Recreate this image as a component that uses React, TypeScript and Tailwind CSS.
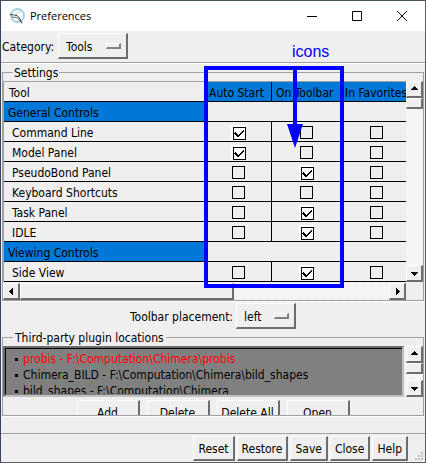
import React, { useState } from 'react';

const raised =
  'border-t border-l border-b-2 border-r-2 border-t-white border-l-white border-b-[#6d6d6d] border-r-[#6d6d6d] bg-[#efefef]';
const trough =
  'bg-[conic-gradient(#ffffff_25%,#ececec_0_50%,#ffffff_0_75%,#ececec_0)] bg-[length:2px_2px]';

type Row = { name: string; checks?: boolean[] };

const rows: Row[] = [
  { name: 'General Controls' },
  { name: 'Command Line', checks: [true, false, false] },
  { name: 'Model Panel', checks: [true, false, false] },
  { name: 'PseudoBond Panel', checks: [false, true, false] },
  { name: 'Keyboard Shortcuts', checks: [false, false, false] },
  { name: 'Task Panel', checks: [false, true, false] },
  { name: 'IDLE', checks: [false, true, false] },
  { name: 'Viewing Controls' },
  { name: 'Side View', checks: [false, true, false] },
];

const columns = ['Auto Start', 'On Toolbar', 'In Favorites'];

const plugins = [
  { text: 'probis - F:\\Computation\\Chimera\\probis', active: true },
  { text: 'Chimera_BILD - F:\\Computation\\Chimera\\bild_shapes', active: false },
  { text: 'bild_shapes - F:\\Computation\\Chimera', active: false },
];

function Check({ initial, label }: { initial: boolean; label: string }) {
  const [on, setOn] = useState(initial);
  return (
    <span className={`relative mx-auto block size-[15px] ${on ? 'bg-white pt-[2px] pl-[2px]' : 'pt-px pl-px'}`}>
      <input
        type="checkbox"
        aria-label={label}
        checked={on}
        onChange={() => setOn(!on)}
        className="block size-[13px] appearance-none border border-black bg-transparent"
      />
      {on && (
        <svg viewBox="0 0 13 13" className="pointer-events-none absolute top-[2px] left-[2px] size-[13px]" shapeRendering="crispEdges">
          <path d="M2 5h1v1h1v1h1v1h1v-1h1v-1h1v-1h1v-1h1v-1h1v2h-1v1h-1v1h-1v1h-1v1h-1v1h-2v-1h-1v-1h-1v-1h-1z" />
        </svg>
      )}
    </span>
  );
}

function Arrow({ dir }: { dir: 'up' | 'down' | 'left' | 'right' }) {
  const paths = {
    up: 'M4 1h1v1h1v1h1v1h1v1h-7v-1h1v-1h1v-1h1z',
    down: 'M1 3h7v1h-1v1h-1v1h-1v1h-1v-1h-1v-1h-1v-1h-1z',
    left: 'M2 4h1v-1h1v-1h1v-1h1v7h-1v-1h-1v-1h-1v-1h-1z',
    right: 'M3 1h1v1h1v1h1v1h1v1h-1v1h-1v1h-1v1h-1z',
  };
  return (
    <button aria-label={`Scroll ${dir}`} className={`flex size-[17px] shrink-0 items-center justify-center ${raised}`}>
      <svg viewBox="0 0 9 9" className="size-[9px] shrink-0" shapeRendering="crispEdges">
        <path d={paths[dir]} />
      </svg>
    </button>
  );
}

function VerticalScroll() {
  return (
    <div className={`flex w-[17px] shrink-0 flex-col ${trough}`}>
      <Arrow dir="up" />
      <div className={`h-[11px] ${raised}`} />
      <div className="flex-1" />
      <Arrow dir="down" />
    </div>
  );
}

function Menu({ id, value, options, width }: { id: string; value: string; options: string[]; width: string }) {
  return (
    <span className={`relative block h-[26px] ${width}`}>
      <select id={id} defaultValue={value} className={`block h-full w-full appearance-none pt-[2px] pl-[7px] ${raised}`}>
        {options.map((o) => (
          <option key={o}>{o}</option>
        ))}
      </select>
      <span className="pointer-events-none absolute top-[10px] right-[7px] h-[6px] w-[15px] border-t border-r-2 border-b-2 border-l border-t-white border-r-[#808080] border-b-[#808080] border-l-white" />
    </span>
  );
}

export default function App() {
  return (
    <div className="relative flex flex-col border border-t-[#4a5361] border-r-[#5c5f63] border-b-[#5c5f63] border-l-[#35465c] bg-[#efefef] font-['DejaVu_Sans_Condensed','Noto_Sans',sans-serif] text-[12px] leading-4 text-black">
      <header className="flex h-[30px] items-center bg-white font-['Open_Sans',sans-serif] text-[11px]">
        <svg viewBox="0 0 17 17" className="ml-[8px] size-[17px]" fill="none">
          <circle cx="8.5" cy="7.5" r="6.5" stroke="#a9cfe2" strokeWidth="2" />
          <path d="M1 6.5L8 7.5L10.5 10L13 15.5" stroke="#28323c" strokeWidth="1" />
          <path d="M3 8.5L11.5 3.5" stroke="#c2cdd4" strokeWidth="1" />
          <path d="M3 9L8 9.5L12.5 14.5" stroke="#5a6670" strokeWidth="1" />
        </svg>
        <h1 className="ml-[4px] flex-1">Preferences</h1>
        <button aria-label="Minimize" className="flex w-[46px] justify-center">
          <svg viewBox="0 0 10 10" className="size-[10px]" stroke="#000"><path d="M0 5.5h10" /></svg>
        </button>
        <button aria-label="Maximize" className="flex w-[44px] justify-center">
          <svg viewBox="0 0 10 10" className="size-[10px]" fill="none" stroke="#000"><path d="M.5.5h9v9h-9z" /></svg>
        </button>
        <button aria-label="Close window" className="flex w-[46px] justify-center">
          <svg viewBox="0 0 10 10" className="size-[10px]" stroke="#000"><path d="M0 0l10 10M10 0L0 10" /></svg>
        </button>
      </header>

      <div className="flex h-[32px] items-start gap-[4px] border-b border-[#a0a0a0] pt-[2px] pl-px shadow-[0_1px_0_#fff]">
        <label htmlFor="category" className="pt-[6px]">Category:</label>
        <Menu id="category" value="Tools" options={['Tools', 'General', 'Messages']} width="w-[70px]" />
      </div>

      <fieldset className="mx-px mt-px min-w-0 border border-[#a0a0a0] shadow-[0_1px_0_#fff]">
        <legend className="ml-[10px] h-[17px] bg-[#efefef] px-px pt-px">Settings</legend>
        <div className="flex">
          <div className="min-w-0 flex-1 overflow-hidden border-t border-l border-[#a0a0a0]">
            <table className="w-[408px] table-fixed border-separate border-spacing-0 text-left">
              <colgroup>
                <col className="w-[201px]" />
                <col className="w-[67px]" />
                <col className="w-[69px]" />
                <col className="w-[71px]" />
              </colgroup>
              <thead>
                <tr className="h-[20px]">
                  <th className="border-b border-black p-0 pt-[3px] pl-[5px] font-normal">Tool</th>
                  {columns.map((c) => (
                    <th key={c} className="border-r border-b border-black bg-[#0078d7] p-0 pt-[3px] pl-[4px] font-normal whitespace-nowrap">
                      {c}
                    </th>
                  ))}
                </tr>
              </thead>
              <tbody>
                {rows.map((r) =>
                  r.checks ? (
                    <tr key={r.name} className="h-[20px]">
                      <th className="border-b border-black p-0 pt-[3px] pl-[8px] font-normal">{r.name}</th>
                      {r.checks.map((v, i) => (
                        <td key={columns[i]} className="border-r border-b border-black p-0 pt-[2px]">
                          <Check initial={v} label={`${r.name}: ${columns[i]}`} />
                        </td>
                      ))}
                    </tr>
                  ) : (
                    <tr key={r.name} className="h-[20px]">
                      <th className="border-b border-black bg-[#0078d7] p-0 pt-[3px] pl-[4px] font-normal">{r.name}</th>
                      <td colSpan={3} className="border-b border-black p-0" />
                    </tr>
                  ),
                )}
              </tbody>
            </table>
          </div>
          <VerticalScroll />
        </div>
        <div className="mt-px flex pr-[17px]">
          <div className={`flex min-w-0 flex-1 ${trough}`}>
            <Arrow dir="left" />
            <div className={`w-[214px] ${raised}`} />
            <div className="flex-1" />
            <Arrow dir="right" />
          </div>
        </div>
      </fieldset>

      <div className="flex justify-center gap-[3px] pt-[2px]">
        <label htmlFor="placement" className="pt-[6px]">Toolbar placement:</label>
        <Menu id="placement" value="left" options={['left', 'right', 'top', 'bottom']} width="w-[60px]" />
      </div>

      <fieldset className="mx-px min-w-0 border border-[#a0a0a0] shadow-[0_1px_0_#fff]">
        <legend className="ml-[10px] h-[17px] bg-[#efefef] px-[2px] pt-px">Third-party plugin locations</legend>
        <div className="flex h-[51px] gap-[2px]">
          <div className="min-w-0 flex-1 border-2 border-[#6d6d6d] border-r-[#c0c0c0] border-b-[#c0c0c0] bg-[#808080] pb-px pl-[10px] shadow-[inset_1px_1px_0_#000]">
            <ul className="h-full overflow-hidden pt-[3px]">
              {plugins.map((p) => (
                <li key={p.text} className={`flex items-center gap-[5px] whitespace-nowrap ${p.active ? 'text-[#ff0000]' : ''}`}>
                  <span className="size-[3px] bg-black" />
                  {p.text}
                </li>
              ))}
            </ul>
          </div>
          <VerticalScroll />
        </div>
        <div className="mt-[3px] flex h-[15px] items-start justify-center gap-[7px] overflow-hidden">
          {['Add', 'Delete', 'Delete All', 'Open'].map((b) => (
            <button key={b} className={`h-[26px] w-[63px] shrink-0 whitespace-nowrap ${raised}`}>{b}</button>
          ))}
        </div>
      </fieldset>

      <footer className="mt-[17px] flex items-start border-t border-[#a0a0a0] pt-[2px] pb-px">
        <div className="flex flex-1 justify-end gap-[2px] pr-[6px]">
          {['Reset', 'Restore', 'Save', 'Close', 'Help'].map((b) => (
            <button key={b} className={`h-[25px] px-[4px] pt-px ${raised}`}>{b}</button>
          ))}
        </div>
        <svg viewBox="0 0 10 10" className="mr-px size-[10px] self-end" fill="#bfbfbf">
          <path d="M7 1h2v2h-2zM4 4h2v2h-2zM7 4h2v2h-2zM1 7h2v2h-2zM4 7h2v2h-2zM7 7h2v2h-2z" />
        </svg>
      </footer>

      <svg viewBox="0 0 144 226" className="pointer-events-none absolute top-[64px] left-[202px] h-[226px] w-[144px]" fill="none" stroke="#0000ff" strokeWidth="4">
        <path d="M3 3H139V221H3zM92 3V64" />
        <path d="M84 59H100L92 83z" fill="#0000ff" stroke="none" />
      </svg>
      <span className="absolute top-[41px] left-[291px] font-['Liberation_Sans',sans-serif] text-[16px] leading-5 text-[#0000ff]">icons</span>
    </div>
  );
}
